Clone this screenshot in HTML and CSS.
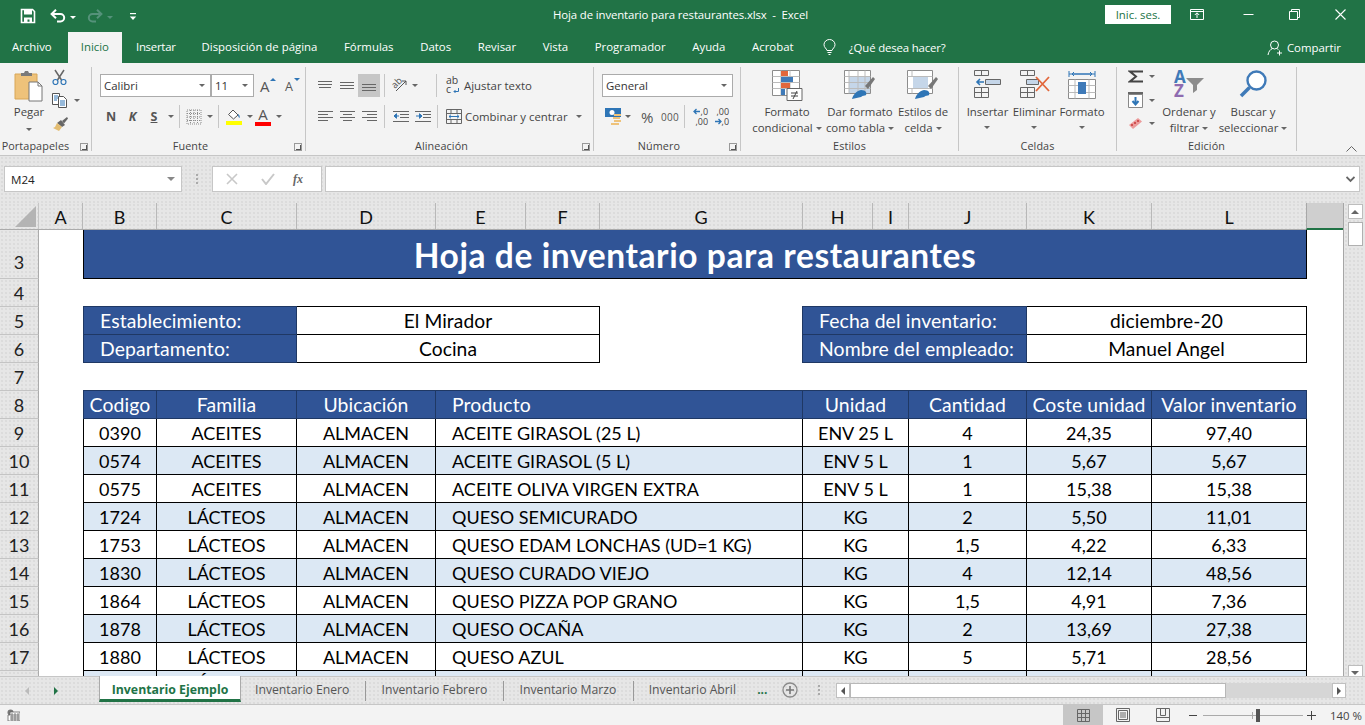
FILE: index.html
```html
<!DOCTYPE html>
<html lang="es">
<head>
<meta charset="utf-8">
<title>Hoja de inventario para restaurantes.xlsx - Excel</title>
<link rel="stylesheet" href="styles.css">
</head>
<body>
<div class="app">
  <header class="titlebar">
    <div class="qat">
      <svg class="i-save" width="16" height="16" viewBox="0 0 16 16"><path d="M1.500 1.500h11l2 2v11h-13z" fill="none" stroke="#fff" stroke-width="1.600"/><path d="M4 1.500h8v5H4zM4 14.500v-5h8v5h-2.500v-3h-2v3z" fill="#fff"/></svg>
      <svg class="i-undo" width="16" height="14" viewBox="0 0 16 14"><path d="M2 5h8.500a3.600 3.600 0 0 1 0 7.400H7" fill="none" stroke="#fff" stroke-width="2"/><path d="M6 .8 1.600 5 6 9.200" fill="none" stroke="#fff" stroke-width="2"/></svg>
      <span class="cw"></span>
      <svg class="i-redo" width="16" height="14" viewBox="0 0 16 14"><path d="M14 5H5.500a3.600 3.600 0 0 0 0 7.400H9" fill="none" stroke="#55927a" stroke-width="2"/><path d="M10 .8 14.400 5 10 9.200" fill="none" stroke="#55927a" stroke-width="2"/></svg>
      <span class="cw dim"></span>
      <svg class="i-cust" width="8" height="9" viewBox="0 0 8 9"><path d="M1 1h6v1.200H1z" fill="#fff"/><path d="M.8 4.500h6.400L4 8z" fill="#fff"/></svg>
    </div>
    <div class="doc">Hoja de inventario para restaurantes.xlsx&nbsp; -&nbsp; Excel</div>
    <button class="signin">Inic. ses.</button>
    <div class="winbtns">
      <svg width="14" height="11" viewBox="0 0 14 11"><path d="M.5.500h13v10H.5zM.5 2.500h13" fill="none" stroke="#fff"/><path d="M7 9V4M4.800 6 7 3.800 9.200 6" fill="none" stroke="#fff"/></svg>
      <svg width="11" height="11" viewBox="0 0 11 11"><path d="M.5 5.500h10" stroke="#fff"/></svg>
      <svg width="11" height="11" viewBox="0 0 11 11"><path d="M.5 2.500h8v8h-8zM2.500 2.500V.5h8v8h-2" fill="none" stroke="#fff"/></svg>
      <svg width="11" height="11" viewBox="0 0 11 11"><path d="M.5.500l10 10M10.500.5l-10 10" stroke="#fff" stroke-width="1.100"/></svg>
    </div>
  </header>

  <nav class="tabs">
    <span class="tab first">Archivo</span>
    <span class="tab active">Inicio</span>
    <span class="tab ins">Insertar</span>
    <span class="tab">Disposición de página</span>
    <span class="tab">Fórmulas</span>
    <span class="tab">Datos</span>
    <span class="tab">Revisar</span>
    <span class="tab">Vista</span>
    <span class="tab">Programador</span>
    <span class="tab">Ayuda</span>
    <span class="tab">Acrobat</span>
    <svg class="bulb" width="13" height="17" viewBox="0 0 13 17"><path d="M4 11.500C3.500 9.500 1 8.500 1 5.700a5.500 5.200 0 0 1 11 0c0 2.800-2.500 3.800-3 5.800zM4.500 13.500h4M5.500 15.500h2" fill="none" stroke="#fff"/></svg>
    <span class="tell">¿Qué desea hacer?</span>
    <span class="share">
      <svg width="17" height="16" viewBox="0 0 17 16"><circle cx="7.500" cy="5" r="4" fill="none" stroke="#fff"/><path d="M1 15c.5-3.500 2.500-5.800 4.500-6.500M9.500 8.500c.8.300 1.400.7 2 1.200M12.500 10.500v5M10 13h5" fill="none" stroke="#fff"/></svg>
      Compartir
    </span>
  </nav>

  <section class="ribbon">
    <div class="group g1">
      <div class="body b1">
        <div class="big pegar">
          <svg width="30" height="32" viewBox="0 0 30 32"><path d="M1 4h22v25H1z" fill="#eec27a"/><path d="M1 4h22v25H1z" fill="none" stroke="#d8a656"/><path d="M7 6V3h3l1-2h3l1 2h3v3z" fill="#7a7a7a"/><path d="M15 12h9l4 4v15H15z" fill="#fff" stroke="#767676"/><path d="M24 12v4h4" fill="none" stroke="#767676"/></svg>
          <span class="lab pegar-l">Pegar</span>
          <span class="car"></span>
        </div>
        <div class="clipcol">
          <svg width="15" height="16" viewBox="0 0 15 16"><path d="M3 1l6.500 10M12 1 5.500 11" stroke="#666" stroke-width="1.500"/><circle cx="3.500" cy="13" r="2.500" fill="none" stroke="#2e75b6" stroke-width="1.200"/><circle cx="11.500" cy="13" r="2.500" fill="none" stroke="#2e75b6" stroke-width="1.200"/></svg>
          <div class="line copy"><svg width="16" height="15" viewBox="0 0 16 15"><path d="M.5.500h7v11h-7z" fill="#fff" stroke="#555"/><path d="M6.500 3.500h5l3 3v8h-8z" fill="#fff" stroke="#555"/><path d="M2 3h4M2 5h4M2 7h3M8 8h5M8 10h5M8 12h5" stroke="#2e75b6"/></svg><span class="car"></span></div>
          <svg width="17" height="16" viewBox="0 0 17 16"><path d="M10 5l5-4 1 1.500-4 5z" fill="#666"/><path d="M9 4l4 5-3 2-5-4z" fill="#666"/><path d="M5 7l5 4-3 4-6-3 2-1z" fill="#e3bd72"/></svg>
        </div>
      </div>
      <div class="glab wl">Portapapeles</div>
      <span class="launch"></span>
    </div>

    <div class="group g2">
      <div class="rw r1">
        <div class="combo w-font">Calibri<span class="car"></span></div>
        <div class="combo w-size">11<span class="car"></span></div>
        <span class="grow">A<i class="tri up"></i></span>
        <span class="shrink">A<i class="tri down"></i></span>
      </div>
      <div class="rw r2">
        <b class="fmt n">N</b><b class="fmt k">K</b><b class="fmt s">S</b><span class="car slot"></span>
        <span class="vsep m-a"></span>
        <svg class="ic-bord" width="16" height="16" viewBox="0 0 16 16"><path d="M1 1h14v14H1zM8 1v14M1 8h14M4.500 1v14M11.500 1v14M1 4.500h14M1 11.500h14" fill="none" stroke="#8c8c8c" stroke-dasharray="1 1"/></svg>
        <span class="car slot"></span>
        <span class="vsep m-b"></span>
        <svg class="ic-fill" width="16" height="17" viewBox="0 0 16 17"><path d="M2.500 6.500 7 2l5 5-4.500 4z" fill="#fff" stroke="#555"/><path d="M12 6c1.500 1 2 2.500 1.500 4-1-.5-1.500-2-1.500-4z" fill="#2e75b6"/><path d="M0 13h16v4H0z" fill="#ffff00"/></svg>
        <span class="car slot s-fill"></span>
        <span class="ic-color">A<i></i></span>
        <span class="car slot s-fill"></span>
      </div>
      <div class="glab wl">Fuente</div>
      <span class="launch"></span>
    </div>

    <div class="group g3">
      <div class="rw r1a">
        <span class="al"><svg width="14" height="10" viewBox="0 0 14 10"><path d="M0 .5h14M0 3.500h14M1 6.500h12" stroke="#666"/></svg></span>
        <span class="al"><svg width="14" height="10" viewBox="0 0 14 10"><path d="M0 1.500h14M0 4.500h14M0 7.500h14" stroke="#666"/></svg></span>
        <span class="al on"><svg width="14" height="10" viewBox="0 0 14 10"><path d="M0 3.500h14M0 6.500h14M0 9.500h14" stroke="#666"/></svg></span>
        <span class="vsep m-c"></span>
        <span class="orient"><span class="rot">ab</span><svg width="16" height="15" viewBox="0 0 16 15"><path d="M3 13 13 3M13 3v4M13 3H9" fill="none" stroke="#555"/></svg></span>
        <span class="car slot"></span>
        <span class="vsep m-d"></span>
        <span class="abc">ab<br>c<svg width="6" height="6" viewBox="0 0 6 6"><path d="M5.500 0v3.500H1M2.500 2 1 3.500 2.500 5" fill="none" stroke="#2e75b6"/></svg></span>
        <span class="lab">Ajustar texto</span>
      </div>
      <div class="rw r2a">
        <span class="al"><svg width="15" height="11" viewBox="0 0 15 11"><path d="M0 .5h15M0 3.500h10M0 6.500h15M0 9.500h10" stroke="#666"/></svg></span>
        <span class="al"><svg width="15" height="11" viewBox="0 0 15 11"><path d="M0 .5h15M3 3.500h9M0 6.500h15M3 9.500h9" stroke="#666"/></svg></span>
        <span class="al"><svg width="15" height="11" viewBox="0 0 15 11"><path d="M0 .5h15M5 3.500h10M0 6.500h15M5 9.500h10" stroke="#666"/></svg></span>
        <span class="vsep m-c2"></span>
        <svg class="ic-ind" width="16" height="12" viewBox="0 0 16 12"><path d="M0 .5h16M7 3.500h9M7 6.500h9M0 10.500h16" stroke="#666" fill="none"/><path d="M6 5H2M3.500 2.700 1 5l2.500 2.300z" fill="#2e75b6" stroke="#2e75b6"/></svg>
        <svg class="ic-ind2" width="16" height="12" viewBox="0 0 16 12"><path d="M0 .5h16M8 3.500h8M8 6.500h8M0 10.500h16" stroke="#666" fill="none"/><path d="M1 5h4M4.500 2.700 7 5 4.500 7.300z" fill="#2e75b6" stroke="#2e75b6"/></svg>
        <span class="vsep m-e"></span>
        <svg class="ic-merge" width="16" height="15" viewBox="0 0 16 15"><path d="M.5.500h15v14H.5zM.5 4.500h15M.5 10.500h15M5 .5v4M11 .5v4M5 10.500v4M11 10.500v4" fill="none" stroke="#666"/><path d="M3 7.500h10M5 5.700 3 7.500l2 1.800M11 5.700l2 1.800-2 1.800" fill="none" stroke="#2e75b6"/></svg>
        <span class="lab">Combinar y centrar</span>
        <span class="car c-merge"></span>
      </div>
      <div class="glab wl">Alineación</div>
      <span class="launch"></span>
    </div>

    <div class="group g4">
      <div class="rw r1n"><div class="combo w-gen">General<span class="car"></span></div></div>
      <div class="rw r2n">
        <svg class="ic-money" width="17" height="17" viewBox="0 0 17 17"><path d="M0 0h16v9H0z" fill="#2e75b6"/><circle cx="7" cy="4.500" r="2.500" fill="#fff"/><path d="M9 6h7v2H9zM8 9h7v2H8zM9 12h7v2H9zM6 15h8v2H6z" fill="#eec27a"/></svg>
        <span class="car slot n-car"></span>
        <span class="pct">%</span>
        <span class="mil">000</span>
        <span class="vsep m-f"></span>
        <span class="dec">
          <span class="dl"><svg width="8" height="7" viewBox="0 0 8 7"><path d="M7 3.500H2M3.500 1 1 3.500 3.500 6" fill="none" stroke="#2e75b6" stroke-width="1.300"/></svg>,0</span>
          <span class="dl">,00</span>
        </span>
        <span class="dec d2">
          <span class="dl">,00</span>
          <span class="dl"><svg width="8" height="7" viewBox="0 0 8 7"><path d="M1 3.500h5M4.500 1 7 3.500 4.500 6" fill="none" stroke="#2e75b6" stroke-width="1.300"/></svg>,0</span>
        </span>
      </div>
      <div class="glab wl">Número</div>
      <span class="launch"></span>
    </div>

    <div class="group g5">
      <div class="body b5">
        <div class="big w76">
          <svg width="31" height="31" viewBox="0 0 31 31"><path d="M.5.500h27v25H.5z" fill="#fff" stroke="#8c8c8c"/><path d="M.5 6.500h27M.5 12.500h27M.5 18.500h27M9 .5v25M18 .5v25" stroke="#bbb"/><path d="M9 1h7v5H9zM9 13h9v5H9z" fill="#e2673b"/><path d="M9 7h12v5H9zM9 19h4v6H9z" fill="#3f7ab8"/><path d="M15 18.500h15v12H15z" fill="#fff" stroke="#666"/><path d="M19 23h7M19 26h7M25 21l-4 8" stroke="#444"/></svg>
          <span class="lab two">Formato<br>condicional<i class="car inl"></i></span>
        </div>
        <div class="big w70">
          <svg width="32" height="30" viewBox="0 0 32 30"><path d="M.5.500h26v23H.5z" fill="#fff" stroke="#8c8c8c"/><path d="M5 7h21v16H5z" fill="#c5d6e9"/><path d="M.5 6.500h26M.5 12.500h26M.5 18.500h26M5 .5v23M14 .5v23M21 .5v23" stroke="#bbb"/><path d="M21 16 29 7l2 2-7 10z" fill="#777"/><path d="M8 29c1-4 4-8 9-9 5 0 6 3 5 5-1 1-3 0-5 2z" fill="#2e75b6"/></svg>
          <span class="lab two">Dar formato<br>como tabla<i class="car inl"></i></span>
        </div>
        <div class="big w56">
          <svg width="32" height="30" viewBox="0 0 32 30"><path d="M.5.500h25v23H.5z" fill="#fff" stroke="#8c8c8c"/><path d="M.5 6.500h25M.5 18.500h25M5 .5v6M5 18.500v5" stroke="#bbb"/><path d="M6 7h15v11H6z" fill="#c5d6e9"/><path d="M21 16 29 7l2 2-7 10z" fill="#777"/><path d="M8 29c1-4 4-8 9-9 5 0 6 3 5 5-1 1-3 0-5 2z" fill="#2e75b6"/></svg>
          <span class="lab two">Estilos de<br>celda<i class="car inl"></i></span>
        </div>
      </div>
      <div class="glab">Estilos</div>
    </div>

    <div class="group g6">
      <div class="body b6">
        <div class="big w47">
          <svg width="27" height="28" viewBox="0 0 27 28"><path d="M.5.500h14v5H.5zM7.500.5v5M.5 17.500h14v10H.5zM.5 22.500h14M7.500 17.500v10M11.500 9.500h15v5h-15zM19 9.500v5" fill="none" stroke="#666"/><path d="M12 10h14v4H12z" fill="#c5d6e9"/><path d="M10 12H3M6 9l-3 3 3 3" fill="none" stroke="#2e75b6" stroke-width="1.600"/></svg>
          <span class="lab two">Insertar<br><i class="car blk"></i></span>
        </div>
        <div class="big w47">
          <svg width="30" height="28" viewBox="0 0 30 28"><path d="M.5.500h14v5H.5zM7.500.5v5M.5 17.500h14v10H.5zM.5 22.500h14M7.500 17.500v10M6.500 9.500h12v5h-12z" fill="none" stroke="#666"/><path d="M7 10h11v4H7z" fill="#c5d6e9"/><path d="m16 7 13 14M29 7 16 21" stroke="#e2673b" stroke-width="1.800"/></svg>
          <span class="lab two">Eliminar<br><i class="car blk"></i></span>
        </div>
        <div class="big w48">
          <svg width="28" height="30" viewBox="0 0 28 30"><path d="M1 4h26M1 1v6M27 1v6M5 4h18M6 2 4 4l2 2M22 2l2 2-2 2" fill="none" stroke="#2e75b6"/><path d="M.5 9.500h27v19h-27z" fill="#fff" stroke="#8c8c8c"/><path d="M.5 15.500h27M.5 22.500h27M7 9.500v19M21 9.500v19" stroke="#bbb"/><path d="M10 12h8v12h-8z" fill="#3f7ab8"/></svg>
          <span class="lab two">Formato<br><i class="car blk"></i></span>
        </div>
      </div>
      <div class="glab">Celdas</div>
    </div>

    <div class="group g7">
      <div class="body b7">
        <div class="edcol">
          <div class="line"><svg width="15" height="13" viewBox="0 0 15 13"><path d="M15 1.500H2l6 5-6 5h13" fill="none" stroke="#444" stroke-width="2"/></svg><span class="car"></span></div>
          <div class="line"><svg width="15" height="16" viewBox="0 0 15 16"><path d="M0 0h15v3H0z" fill="#666"/><path d="M.5 2.500h14v13H.5z" fill="#fff" stroke="#888"/><path d="M7.500 5v7M4.500 9l3 3.500 3-3.500" fill="none" stroke="#2e75b6" stroke-width="2"/></svg><span class="car"></span></div>
          <div class="line"><svg width="15" height="13" viewBox="0 0 15 13"><path d="M1 8 10 1l4 3.500L5 12z" fill="#eb9b9b"/><path d="M3 8h2M6 6h2M9 4h2" stroke="#d05050" stroke-width="2"/></svg><span class="car"></span></div>
        </div>
        <div class="big w50">
          <span class="azbox"><span class="az a">A</span><span class="az z">Z</span><svg class="funnel" width="18" height="15" viewBox="0 0 18 15"><path d="M0 0h18l-7 7v5l-4 3V7z" fill="#8c8c8c"/></svg></span>
          <span class="lab two">Ordenar y<br>filtrar<i class="car inl"></i></span>
        </div>
        <div class="big w78">
          <svg width="28" height="28" viewBox="0 0 28 28"><circle cx="17.500" cy="10.500" r="9" fill="#fff" stroke="#3f7ab8" stroke-width="2.400"/><path d="M10.500 17.500 2 26" stroke="#3f7ab8" stroke-width="3.500"/></svg>
          <span class="lab two">Buscar y<br>seleccionar<i class="car inl"></i></span>
        </div>
      </div>
      <div class="glab">Edición</div>
    </div>
    <svg class="collapse" width="11" height="6" viewBox="0 0 11 6"><path d="M.5 5.500 5.500.5l5 5" fill="none" stroke="#666"/></svg>
  </section>

  <section class="fbar">
    <div class="namebox">M24<span class="car big-car"></span></div>
    <span class="vdots"></span>
    <div class="fxbox">
      <svg width="12" height="12" viewBox="0 0 12 12"><path d="M1 1l10 10M11 1 1 11" stroke="#c8c8c8" stroke-width="1.600"/></svg>
      <svg width="14" height="12" viewBox="0 0 14 12"><path d="M1 6l4 5 8-10" fill="none" stroke="#c8c8c8" stroke-width="2"/></svg>
      <span class="fx">fx</span>
    </div>
    <div class="finput"><svg width="9" height="7" viewBox="0 0 9 7"><path d="M.5 1 4.500 5l4-4" fill="none" stroke="#666" stroke-width="1.800"/></svg></div>
  </section>

  <section class="sheetwrap">
    <div class="sheet">
      <div class="r head">
        <div class="corner"><svg width="21" height="21" viewBox="0 0 21 21"><path d="M21 0v21H0z" fill="#b4b4b4"/></svg></div>
        <div class="ch">A</div><div class="ch">B</div><div class="ch">C</div><div class="ch">D</div><div class="ch">E</div><div class="ch">F</div><div class="ch">G</div><div class="ch">H</div><div class="ch">I</div><div class="ch">J</div><div class="ch">K</div><div class="ch">L</div><div class="ch sel"></div>
      </div>
      <div class="r r-title"><div class="rh">3</div><div></div><div class="c title s11 first">Hoja de inventario para restaurantes</div></div>
      <div class="r"><div class="rh">4</div></div>
      <div class="r"><div class="rh">5</div><div></div><div class="c hd left s2 first top">Establecimiento:</div><div class="c lc s3 top">El Mirador</div><div></div><div class="c hd left s3 first top shift">Fecha del inventario:</div><div class="c lc s2 top">diciembre-20</div></div>
      <div class="r"><div class="rh">6</div><div></div><div class="c hd left s2 first">Departamento:</div><div class="c lc s3">Cocina</div><div></div><div class="c hd left s3 first shift">Nombre del empleado:</div><div class="c lc s2">Manuel Angel</div></div>
      <div class="r"><div class="rh">7</div></div>
      <div class="r"><div class="rh">8</div><div></div><div class="c hd first top">Codigo</div><div class="c hd top">Familia</div><div class="c hd top">Ubicación</div><div class="c hd left s3 top">Producto</div><div class="c hd s2 top">Unidad</div><div class="c hd top">Cantidad</div><div class="c hd top">Coste unidad</div><div class="c hd top">Valor inventario</div></div>
      <div class="r"><div class="rh">9</div><div></div><div class="c first">0390</div><div class="c">ACEITES</div><div class="c">ALMACEN</div><div class="c left s3">ACEITE GIRASOL (25 L)</div><div class="c s2">ENV 25 L</div><div class="c">4</div><div class="c">24,35</div><div class="c">97,40</div></div>
      <div class="r band"><div class="rh">10</div><div></div><div class="c first">0574</div><div class="c">ACEITES</div><div class="c">ALMACEN</div><div class="c left s3">ACEITE GIRASOL (5 L)</div><div class="c s2">ENV 5 L</div><div class="c">1</div><div class="c">5,67</div><div class="c">5,67</div></div>
      <div class="r"><div class="rh">11</div><div></div><div class="c first">0575</div><div class="c">ACEITES</div><div class="c">ALMACEN</div><div class="c left s3">ACEITE OLIVA VIRGEN EXTRA</div><div class="c s2">ENV 5 L</div><div class="c">1</div><div class="c">15,38</div><div class="c">15,38</div></div>
      <div class="r band"><div class="rh">12</div><div></div><div class="c first">1724</div><div class="c">LÁCTEOS</div><div class="c">ALMACEN</div><div class="c left s3">QUESO SEMICURADO</div><div class="c s2">KG</div><div class="c">2</div><div class="c">5,50</div><div class="c">11,01</div></div>
      <div class="r"><div class="rh">13</div><div></div><div class="c first">1753</div><div class="c">LÁCTEOS</div><div class="c">ALMACEN</div><div class="c left s3">QUESO EDAM LONCHAS (UD=1 KG)</div><div class="c s2">KG</div><div class="c">1,5</div><div class="c">4,22</div><div class="c">6,33</div></div>
      <div class="r band"><div class="rh">14</div><div></div><div class="c first">1830</div><div class="c">LÁCTEOS</div><div class="c">ALMACEN</div><div class="c left s3">QUESO CURADO VIEJO</div><div class="c s2">KG</div><div class="c">4</div><div class="c">12,14</div><div class="c">48,56</div></div>
      <div class="r"><div class="rh">15</div><div></div><div class="c first">1864</div><div class="c">LÁCTEOS</div><div class="c">ALMACEN</div><div class="c left s3">QUESO PIZZA POP GRANO</div><div class="c s2">KG</div><div class="c">1,5</div><div class="c">4,91</div><div class="c">7,36</div></div>
      <div class="r band"><div class="rh">16</div><div></div><div class="c first">1878</div><div class="c">LÁCTEOS</div><div class="c">ALMACEN</div><div class="c left s3">QUESO OCAÑA</div><div class="c s2">KG</div><div class="c">2</div><div class="c">13,69</div><div class="c">27,38</div></div>
      <div class="r"><div class="rh">17</div><div></div><div class="c first">1880</div><div class="c">LÁCTEOS</div><div class="c">ALMACEN</div><div class="c left s3">QUESO AZUL</div><div class="c s2">KG</div><div class="c">5</div><div class="c">5,71</div><div class="c">28,56</div></div>
      <div class="r band cut"><div class="rh"></div><div></div><div class="c first"></div><div class="c">LÁCTEOS</div><div class="c"></div><div class="c left s3"></div><div class="c s2"></div><div class="c"></div><div class="c"></div><div class="c"></div></div>
    </div>
    <aside class="vscroll">
      <span class="sb-btn"><i class="up2"></i></span>
      <span class="sb-thumb"></span>
      <span class="sb-btn last"><i class="dn2"></i></span>
    </aside>
  </section>

  <section class="tabbar">
    <div class="nav"><i class="nl"></i><i class="nr"></i></div>
    <span class="stab on">Inventario Ejemplo</span>
    <span class="stab en">Inventario Enero</span>
    <span class="stab sp">Inventario Febrero</span>
    <span class="stab sp">Inventario Marzo</span>
    <span class="stab sp">Inventario Abril</span>
    <span class="more">...</span>
    <svg class="add" width="16" height="16" viewBox="0 0 16 16"><circle cx="8" cy="8" r="7" fill="none" stroke="#8a8a8a" stroke-width="1.300"/><path d="M8 4v8M4 8h8" stroke="#777" stroke-width="1.600"/></svg>
    <span class="vdots small"></span>
    <div class="hscroll">
      <span class="hbtn"><i class="nl dark"></i></span>
      <span class="hthumb"></span>
      <span class="hbtn end"><i class="nr dark"></i></span>
    </div>
  </section>

  <footer class="status">
    <svg class="macro" width="13" height="12" viewBox="0 0 13 12"><circle cx="3.500" cy="3.500" r="3" fill="#777"/><path d="M3 3h10v9H1V6h2z" fill="#fff" stroke="#666" stroke-width=".8"/><path d="M3 6h9M3 8h9M3 10h9M5 4v8M8 4v8M11 4v8" stroke="#666" stroke-width=".8"/></svg>
    <div class="views">
      <span class="view on"><svg width="13" height="13" viewBox="0 0 13 13"><path d="M.5.500h12v12H.5zM.5 4.500h12M.5 8.500h12M4.500.5v12M8.500.5v12" fill="none" stroke="#666"/></svg></span>
      <span class="view"><svg width="14" height="14" viewBox="0 0 14 14"><path d="M.5.500h13v13H.5z" fill="none" stroke="#666"/><path d="M2.500 2.500h9v9h-9zM4 5h6M4 7h6M4 9h6" fill="none" stroke="#666"/></svg></span>
      <span class="view"><svg width="14" height="14" viewBox="0 0 14 14"><path d="M.5.500h13v13H.5zM4.500.5v7h5v-7M.5 9.500h13" fill="none" stroke="#666"/></svg></span>
    </div>
    <div class="zoomer">
      <span class="zm"></span>
      <div class="slider"><i class="tick"></i><i class="knob"></i></div>
      <span class="zp"></span>
      <span class="zpct">140 %</span>
    </div>
  </footer>
</div>
</body>
</html>
```

FILE: styles.css
```css
* { box-sizing: border-box; }
html, body { margin: 0; padding: 0; height: 100%; overflow: hidden; }
body { font-family: "Open Sans", "Noto Sans", sans-serif; font-size: 11.4px; color: #444; background: #f3f3f3; }
.app { width: 1365px; height: 725px; display: flex; flex-direction: column; overflow: hidden; }
button { font: inherit; }
svg { display: block; flex: none; }
i, em { font-style: normal; }

/* title bar */
.titlebar { height: 32px; background: #217346; color: #fff; display: flex; align-items: center; position: relative; flex: none; }
.qat { display: flex; align-items: center; padding-left: 20px; }
.i-undo { margin-left: 14px; }
.cw { width: 0; height: 0; border-left: 3px solid transparent; border-right: 3px solid transparent; border-top: 3px solid #fff; margin: 2px 0 0 4px; }
.cw.dim { border-top-color: #55927a; }
.i-redo { margin-left: 11px; }
.i-cust { margin-left: 16px; }
.doc { position: absolute; left: 553px; top: 0; line-height: 30px; font-size: 11.4px; white-space: nowrap; letter-spacing: -.12px; }
.signin { margin-left: auto; width: 66px; height: 19px; background: #fff; border: 0; color: #217346; padding: 0; font-size: 11.4px; margin-top: -3px; }
.winbtns { display: flex; align-items: center; width: 194px; margin-top: -3px; padding-left: 19px; }
.winbtns svg:nth-child(2) { margin-left: 39px; }
.winbtns svg:nth-child(3) { margin-left: 35px; }
.winbtns svg:nth-child(4) { margin-left: 35px; }

/* tabs */
.tabs { height: 31px; background: #217346; color: #fff; display: flex; align-items: center; flex: none; }
.tab { height: 31px; line-height: 30px; padding: 0 13.3px; white-space: nowrap; }
.tab.first { padding-left: 12px; padding-right: 16px; }
.tab.active { background: #f3f3f3; color: #217346; padding: 0 13px; }
.tab.ins { letter-spacing: -.25px; padding: 0 12.6px 0 14px; }
.bulb { margin-left: 16px; }
.tell { margin-left: 13px; letter-spacing: -.15px; }
.share { margin-left: auto; margin-right: 24px; display: flex; align-items: center; gap: 3px; }

/* ribbon */
.ribbon { height: 93px; background: #f3f3f3; display: flex; border-bottom: 1px solid #c6c6c6; position: relative; flex: none; padding-top: 4px; }
.group { position: relative; height: 84px; border-right: 1px solid #c6c6c6; display: flex; flex-direction: column; }
.g1 { width: 92px; padding-left: 10px; }
.g2 { width: 214px; padding-left: 8px; }
.g3 { width: 288px; padding-left: 8px; }
.g4 { width: 147px; padding-left: 8px; }
.g5 { width: 218px; padding-left: 8px; }
.g6 { width: 158px; padding-left: 5px; }
.g7 { width: 180px; padding-left: 11px; }
.glab { position: absolute; left: 0; right: 0; bottom: -2px; height: 14px; line-height: 14px; text-align: center; font-size: 10.8px; letter-spacing: .1px; }
.glab.wl { padding-right: 16px; }
.g1 .glab.wl { padding-right: 20px; }
.launch { position: absolute; right: 3px; bottom: 0; width: 8px; height: 8px; border: 1px solid #999; }
.launch::after { content: ""; position: absolute; right: 0; bottom: 0; width: 4px; height: 4px; border-right: 1px solid #555; border-bottom: 1px solid #555; }
.body { display: flex; }
.car { display: inline-block; width: 0; height: 0; border-left: 3.5px solid transparent; border-right: 3.5px solid transparent; border-top: 3.5px solid #666; flex: none; }
.car.inl { margin-left: 3px; vertical-align: 2px; border-left-width: 3px; border-right-width: 3px; border-top-width: 3px; }
.car.blk { display: block; margin: 6px auto 0; }
.big { display: flex; flex-direction: column; align-items: center; padding-top: 3px; color: #444; height: 69px; }
.lab { white-space: nowrap; }
.lab.two { text-align: center; line-height: 16px; margin-top: auto; display: block; height: 32px; }
.pegar { width: 38px; }
.pegar-l { margin-top: 2px; line-height: 16px; }
.pegar .car { margin-top: 8px; }
.clipcol { display: flex; flex-direction: column; margin-left: 4px; padding-top: 2px; gap: 8px; }
.line { display: flex; align-items: center; }
.copy .car { margin-left: 6px; }

.rw { display: flex; align-items: center; height: 23px; }
.r1, .r1a, .r1n { margin-top: 7px; }
.r2, .r2a, .r2n { margin-top: 8px; }
.combo { height: 23px; border: 1px solid #ababab; background: #fff; display: flex; align-items: center; justify-content: space-between; padding: 0 5px 0 3px; color: #333; }
.w-font { width: 111px; }
.w-size { width: 43px; }
.w-gen { width: 131px; }
.grow { position: relative; font-size: 15px; color: #555; margin-left: 6px; width: 20px; }
.shrink { position: relative; font-size: 12.5px; color: #555; margin-left: 5px; width: 20px; padding-top: 2px; }
.tri { position: absolute; top: 2px; left: 10px; border-left: 3px solid transparent; border-right: 3px solid transparent; }
.tri.up { border-bottom: 3px solid #2e75b6; }
.tri.down { border-top: 3px solid #2e75b6; left: 9px; }
.fmt { font-size: 12.5px; color: #555; text-align: center; }
.fmt.n { width: 22px; }
.fmt.k { width: 21px; font-style: italic; }
.fmt.s { width: 22px; text-decoration: underline; }
.car.slot { margin: 0 2.5px; }
.vsep { width: 1px; height: 23px; background: #c6c6c6; flex: none; }
.m-a { margin: 0 6px 0 3px; }
.m-b { margin: 0 7px 0 3px; }
.ic-bord { margin-right: 2px; }
.ic-fill { margin-right: 2px; }
.s-fill { margin-right: 4px; }
.ic-color { width: 16px; height: 19px; position: relative; text-align: center; font-size: 15px; line-height: 15px; color: #555; margin-right: 2px; }
.ic-color i { position: absolute; left: 0; right: 0; bottom: 0; height: 4px; background: #f00; }

.al { width: 22px; height: 23px; display: flex; align-items: center; justify-content: center; flex: none; }
.al.on { background: #c6c6c6; }
.m-c { margin: 0 8px 0 4px; }
.m-c2 { margin: 0 8px 0 4px; }
.orient { position: relative; width: 16px; height: 15px; flex: none; }
.rot { position: absolute; left: -2px; top: -1px; font-size: 9.5px; line-height: 11px; color: #555; transform: rotate(-45deg); }
.m-d { margin: 0 9px 0 16px; }
.abc { position: relative; width: 13px; height: 20px; font-size: 10.5px; line-height: 9.5px; color: #444; margin-right: 5px; flex: none; }
.abc svg { position: absolute; right: 0; bottom: 2px; }
.ic-ind { margin-right: 6px; }
.m-e { margin: 0 8px 0 6px; }
.ic-merge { margin-right: 3px; }
.c-merge { margin-left: 8px; }

.ic-money { margin-left: 3px; }
.n-car { margin: 0 3px 0 4px; }
.pct { font-size: 15px; color: #555; margin-left: 8px; width: 18px; }
.mil { font-size: 10px; color: #555; margin-left: 2px; letter-spacing: .3px; }
.m-f { margin: 0 8px 0 5px; }
.dec { display: flex; flex-direction: column; align-items: flex-end; width: 15px; font-size: 9px; line-height: 10px; color: #444; flex: none; }
.d2 { margin-left: 6px; }
.dl { display: flex; align-items: center; white-space: nowrap; height: 10px; }

.w76 { width: 76px; } .w70 { width: 70px; } .w56 { width: 56px; }
.w47 { width: 47px; } .w48 { width: 48px; } .w50 { width: 50px; } .w78 { width: 78px; }
.edcol { width: 36px; flex: none; display: flex; flex-direction: column; gap: 9px; padding-top: 3px; }
.edcol .car { margin-left: 6px; }
.azbox { position: relative; width: 30px; height: 29px; display: flex; flex-direction: column; align-items: flex-start; }
.az { font-size: 17px; font-weight: 700; line-height: 14px; width: 12px; overflow: visible; }
.az.a { color: #3f7ab8; } .az.z { color: #8e6bb0; }
.funnel { position: absolute; left: 12px; top: 8px; }
.collapse { position: absolute; right: 8px; bottom: 3px; }

/* formula bar */
.fbar { height: 47px; background: #e6e6e6 radial-gradient(#dbdbdb .7px, transparent .8px) 0 0 / 4px 4px; display: flex; align-items: flex-start; padding: 10px 5px 0 4px; flex: none; }
.namebox { width: 178px; height: 26px; background: #fff; border: 1px solid #c6c6c6; display: flex; align-items: center; justify-content: space-between; padding: 0 6px; color: #222; font-size: 11.6px; }
.big-car { border-left-width: 4px; border-right-width: 4px; border-top-width: 4px; border-top-color: #888; }
.vdots { width: 2px; height: 11px; margin: 8px 14px 0 14px; background: repeating-linear-gradient(#aaa 0 2px, transparent 2px 4px); flex: none; }
.fxbox { width: 110px; height: 26px; background: #fff; border: 1px solid #c6c6c6; display: flex; align-items: center; padding-left: 13px; }
.fxbox svg + svg { margin-left: 23px; }
.fx { margin-left: 18px; font: italic bold 12px "Liberation Serif", serif; color: #666; }
.finput { margin-left: 3px; width: 1035px; height: 26px; background: #fff; border: 1px solid #c6c6c6; display: flex; align-items: center; justify-content: flex-end; padding-right: 4px; }

/* sheet */
.sheetwrap { height: 474px; display: flex; background: #e6e6e6; flex: none; overflow: hidden; }
.sheet { width: 1344px; background: #fff; border-right: 1px solid #a6a6a6; overflow: hidden; font-family: Lato, "Open Sans", sans-serif; font-size: 18px; color: #000; }
.r { display: grid; height: 28px; grid-template-rows: 100%; grid-template-columns: 39px 44px 74px 140px 139px 90px 74px 203px 70px 36px 118px 125px 155px 36px; }
.r.head { height: 27px; background: #e6e6e6 radial-gradient(#dbdbdb .7px, transparent .8px) 0 0 / 4px 4px; border-bottom: 1px solid #ababab; }
.corner { display: flex; padding: 3px 0 0 15px; border-right: 1px solid #c6c6c6; }
.ch { border-right: 1px solid #b8b8b8; text-align: center; line-height: 28px; color: #111; }
.ch.sel { background: #cfcfcf; border-right: 0; border-bottom: 2px solid #217346; height: 27px; margin-left: -1px; border-left: 1px solid #a8a8a8; }
.rh { background: #e6e6e6 radial-gradient(#dbdbdb .7px, transparent .8px) 0 0 / 4px 4px; border-right: 1px solid #ababab; border-bottom: 1px solid #c4c4c4; text-align: center; line-height: 28px; color: #222; }
.r-title { height: 49px; }
.r-title .rh { padding-top: 18px; }
.c { border-right: 1px solid #000; border-bottom: 1px solid #000; display: flex; align-items: center; justify-content: center; white-space: nowrap; }
.c.first { border-left: 1px solid #000; }
.s2 { grid-column: span 2; } .s3 { grid-column: span 3; } .s11 { grid-column: span 11; }
.left { justify-content: flex-start; padding-left: 16px; }
.top { border-top: 1px solid #000; margin-top: -1px; height: 29px; }
.shift { margin-left: -1px; }
.hd { background: #305496; color: #fff; font-size: 19.4px; letter-spacing: .1px; border-color: #1f3864; }
.hd.first { border-color: #1f3864; }
.lc { font-size: 19.2px; letter-spacing: .1px; }
.title { background: #305496; color: #fff; font-weight: 700; font-size: 33.5px; letter-spacing: .6px; padding-top: 2px; border-color: #000; }
.band .c { background: #dce8f4; }
.cut .c { padding-bottom: 5px; align-items: flex-start; line-height: 22px; }

/* vertical scrollbar */
.vscroll { width: 21px; display: flex; flex-direction: column; align-items: center; padding: 1px 3px 0 4px; flex: none; background: #e6e6e6 radial-gradient(#dbdbdb .7px, transparent .8px) 0 0 / 4px 4px; }
.sb-btn { width: 15px; height: 15px; background: #fff; border: 1px solid #bdbdbd; display: flex; align-items: center; justify-content: center; flex: none; }
.sb-thumb { width: 15px; height: 24px; background: #fff; border: 1px solid #b0b0b0; margin-top: 3px; flex: none; }
.sb-btn.last { margin-top: auto; margin-bottom: -3px; }
.up2 { border-left: 4px solid transparent; border-right: 4px solid transparent; border-bottom: 4px solid #666; }
.dn2 { border-left: 4px solid transparent; border-right: 4px solid transparent; border-top: 4px solid #666; }

/* sheet tabs */
.tabbar { height: 29px; background: #e6e6e6 radial-gradient(#dbdbdb .7px, transparent .8px) 0 0 / 4px 4px; border-top: 1px solid #c6c6c6; border-bottom: 1px solid #c6c6c6; display: flex; align-items: flex-start; flex: none; margin-top: -1px; position: relative; }
.nav { width: 99px; display: flex; align-items: center; height: 27px; padding-left: 25px; gap: 25px; flex: none; }
.nl { width: 0; height: 0; border-top: 4px solid transparent; border-bottom: 4px solid transparent; border-right: 4px solid #bbb; }
.nr { width: 0; height: 0; border-top: 4px solid transparent; border-bottom: 4px solid transparent; border-left: 4px solid #217346; }
.nl.dark { border-right-color: #555; } .nr.dark { border-left-color: #555; }
.stab { height: 27px; line-height: 26px; padding: 0 16.2px; position: relative; color: #555; white-space: nowrap; flex: none; font-size: 12.2px; }
.stab.en { padding-left: 14px; padding-right: 16px; }
.stab.sp::before { content: ""; position: absolute; left: 0; top: 4px; height: 20px; width: 1px; background: #999; }
.stab.on { width: 142px; padding: 0; text-align: center; background: #fff; color: #217346; font-weight: 700; border-left: 1px solid #aaa; border-right: 1px solid #aaa; border-bottom: 3px solid #217346; margin-top: -1px; height: 26px; line-height: 27px; font-size: 12.3px; }
.more { color: #217346; font-weight: 700; margin: 1px 0 0 5px; line-height: 24px; width: 19px; font-size: 12px; }
.add { margin: 5px 0 0 6px; }
.vdots.small { margin: 8px 16px 0 20px; height: 11px; }
.hscroll { display: flex; height: 15px; width: 510px; background: #d6d6d6; margin-top: 6px; flex: none; }
.hbtn { width: 14px; height: 15px; background: #fff; border: 1px solid #c0c0c0; display: flex; align-items: center; justify-content: center; flex: none; }
.hthumb { width: 376px; background: #fff; border: 1px solid #b8b8b8; flex: none; }
.hbtn.end { margin-left: auto; }

/* status bar */
.status { height: 20px; background: #f3f3f3; display: flex; align-items: center; padding-left: 7px; position: relative; flex: none; }
.views { display: flex; margin-left: 1043px; }
.view { width: 40px; height: 20px; display: flex; align-items: center; justify-content: center; }
.view.on { background: #c6c6c6; }
.zoomer { display: flex; align-items: center; margin-left: 6px; }
.zm { width: 8px; height: 1px; background: #444; }
.slider { width: 100px; height: 1px; background: #aaa; position: relative; margin: 0 4px 0 6px; }
.tick { position: absolute; left: 49px; top: -3px; width: 1px; height: 7px; background: #aaa; }
.knob { position: absolute; left: 53px; top: -6px; width: 4px; height: 13px; background: #555; }
.zp { width: 9px; height: 9px; background: linear-gradient(#444,#444) center/9px 1px no-repeat, linear-gradient(#444,#444) center/1px 9px no-repeat; }
.zpct { margin-left: 14px; color: #444; white-space: nowrap; }
```
